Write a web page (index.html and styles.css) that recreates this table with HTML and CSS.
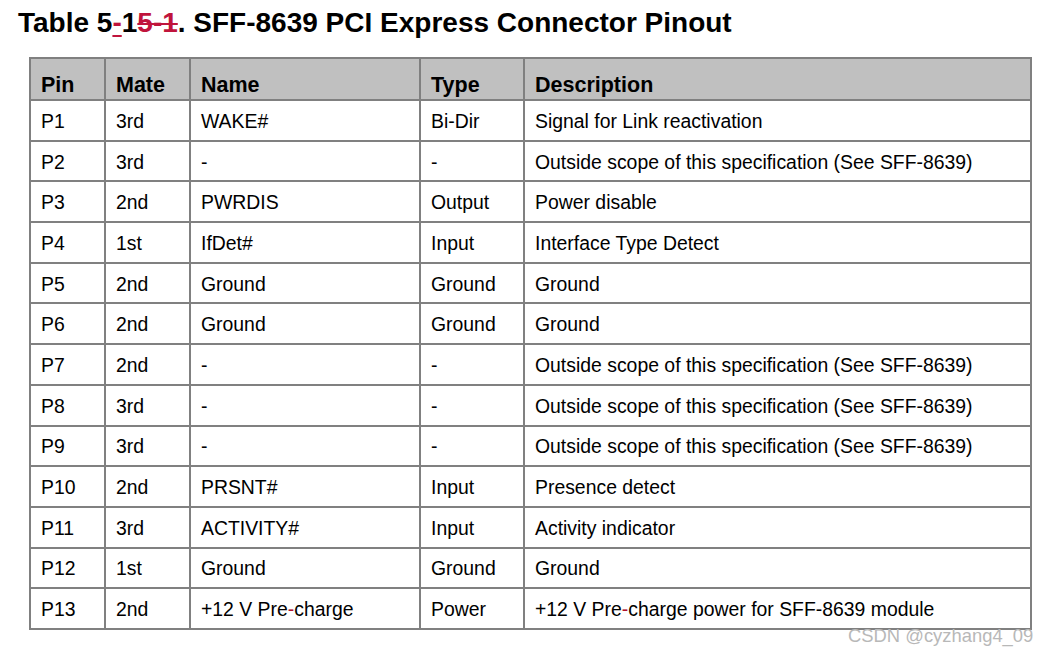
FILE: index.html
```html
<!DOCTYPE html>
<html>
<head>
<meta charset="utf-8">
<link rel="stylesheet" href="styles.css">
</head>
<body>
<div class="page">
  <h1 class="title">Table 5<span class="ins">-</span>1<span class="del">5-1</span>. SFF-8639 PCI Express Connector Pinout</h1>
  <table class="pinout">
    <colgroup>
      <col class="c-pin"><col class="c-mate"><col class="c-name"><col class="c-type"><col class="c-desc">
    </colgroup>
    <thead>
      <tr><th>Pin</th><th>Mate</th><th>Name</th><th>Type</th><th>Description</th></tr>
    </thead>
    <tbody>
      <tr><td>P1</td><td>3rd</td><td>WAKE#</td><td>Bi-Dir</td><td>Signal for Link reactivation</td></tr>
      <tr><td>P2</td><td>3rd</td><td>-</td><td>-</td><td>Outside scope of this specification (See SFF-8639)</td></tr>
      <tr><td>P3</td><td>2nd</td><td>PWRDIS</td><td>Output</td><td>Power disable</td></tr>
      <tr><td>P4</td><td>1st</td><td>IfDet#</td><td>Input</td><td>Interface Type Detect</td></tr>
      <tr><td>P5</td><td>2nd</td><td>Ground</td><td>Ground</td><td>Ground</td></tr>
      <tr><td>P6</td><td>2nd</td><td>Ground</td><td>Ground</td><td>Ground</td></tr>
      <tr><td>P7</td><td>2nd</td><td>-</td><td>-</td><td>Outside scope of this specification (See SFF-8639)</td></tr>
      <tr><td>P8</td><td>3rd</td><td>-</td><td>-</td><td>Outside scope of this specification (See SFF-8639)</td></tr>
      <tr><td>P9</td><td>3rd</td><td>-</td><td>-</td><td>Outside scope of this specification (See SFF-8639)</td></tr>
      <tr><td>P10</td><td>2nd</td><td>PRSNT#</td><td>Input</td><td>Presence detect</td></tr>
      <tr><td>P11</td><td>3rd</td><td>ACTIVITY#</td><td>Input</td><td>Activity indicator</td></tr>
      <tr><td>P12</td><td>1st</td><td>Ground</td><td>Ground</td><td>Ground</td></tr>
      <tr><td>P13</td><td>2nd</td><td>+12 V Pre<span class="chg">-</span>charge</td><td>Power</td><td>+12 V Pre<span class="chg">-</span>charge power for SFF-8639 module</td></tr>
    </tbody>
  </table>
  <div class="watermark">CSDN @cyzhang4_09</div>
</div>
</body>
</html>
```

FILE: styles.css
```css
html, body {
  margin: 0;
  padding: 0;
  background: #ffffff;
}
.page {
  position: relative;
  width: 1038px;
  height: 653px;
  font-family: "Liberation Sans", Arial, sans-serif;
  color: #000;
}
.title {
  margin: 0;
  padding: 5px 0 0 18px;
  height: 52px;
  box-sizing: border-box;
  font-size: 28px;
  font-weight: bold;
  line-height: 36px;
  letter-spacing: 0;
}
.ins {
  color: #c0143c;
  text-decoration: underline;
  text-decoration-thickness: 2px;
  text-underline-offset: 3px;
}
.del {
  color: #c0143c;
  text-decoration: line-through;
  text-decoration-thickness: 2px;
}
.chg {
  color: #b0102a;
}
.pinout {
  margin-left: 29px;
  margin-top: 5px;
  border-collapse: collapse;
  width: 1003px;
  table-layout: fixed;
  font-size: 19.4px;
}
.c-pin { width: 75px; }
.c-mate { width: 85px; }
.c-name { width: 230px; }
.c-type { width: 104px; }
.c-desc { width: auto; }
.pinout th,
.pinout td {
  border: 2px solid #808080;
  text-align: left;
  padding: 0 0 0 10px;
  white-space: nowrap;
  vertical-align: middle;
}
.pinout th {
  background: #c0c0c0;
  font-size: 21.5px;
  font-weight: bold;
  height: 42px;
  padding-top: 13px;
  box-sizing: border-box;
}
.pinout td {
  height: 36.7px;
  padding-top: 2px;
}
.watermark {
  position: absolute;
  left: 848px;
  top: 625px;
  font-size: 18.4px;
  color: #b8b8b8;
  letter-spacing: 0;
  font-family: "Liberation Sans", Arial, sans-serif;
}
```
